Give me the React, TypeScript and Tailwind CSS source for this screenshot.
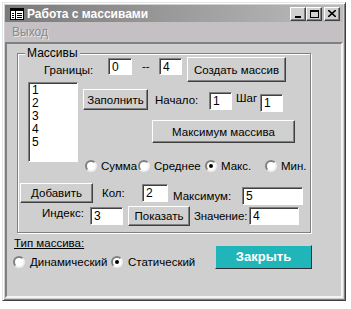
import React from "react";

const font = "font-['Liberation_Sans',Arial,sans-serif]";

function Btn({ className, children }: { className: string; children: React.ReactNode }) {
  return (
    <div
      className={`flex shrink-0 items-center justify-center border border-t-white border-l-white border-r-[#404040] border-b-[#404040] bg-[#d0d0d0] text-black shadow-[inset_-1px_-1px_0_#808080] ${className}`}
    >
      {children}
    </div>
  );
}

function Field({ className, value }: { className: string; value: string }) {
  return (
    <div
      className={`flex shrink-0 items-center border border-t-[#808080] border-l-[#808080] border-r-white border-b-white bg-white pl-[3px] text-[12px] text-black shadow-[inset_1px_1px_0_#404040] ${className}`}
    >
      {value}
    </div>
  );
}

function Radio({ checked }: { checked?: boolean }) {
  return (
    <span className="flex h-[12px] w-[12px] shrink-0 items-center justify-center rounded-full border-2 border-t-[#808080] border-l-[#808080] border-r-[#f0f0f0] border-b-[#f0f0f0] bg-white">
      {checked && <span className="h-[4px] w-[4px] rounded-full bg-black" />}
    </span>
  );
}

function CapBtn({ className, children }: { className: string; children: React.ReactNode }) {
  return (
    <div
      className={`flex h-[14px] w-[16px] items-center justify-center border border-t-white border-l-white border-r-[#404040] border-b-[#404040] bg-[#d0d0d0] shadow-[inset_-1px_-1px_0_#808080] ${className}`}
    >
      {children}
    </div>
  );
}

export default function App() {
  return (
    <div className={`h-[309px] w-[351px] bg-white pl-[2px] pt-[2px] text-[11.5px] leading-[14px] ${font}`}>
      {/* window */}
      <div className="flex h-[299px] w-[344px] flex-col border border-t-[#e4e4e4] border-l-[#e4e4e4] border-r-[#404040] border-b-[#404040] bg-[#cfcfcf] p-[2px] shadow-[inset_1px_1px_0_#ffffff,inset_-1px_-1px_0_#808080]">
        {/* title bar */}
        <div className="flex h-[17px] shrink-0 items-center bg-linear-to-r from-[#7a7a7a] to-[#bcbcbc] pl-[5px] pr-[3px]">
          <svg width="14" height="12" viewBox="0 0 14 12" className="shrink-0">
            <rect x="0.5" y="0.5" width="13" height="11" fill="#fff" stroke="#000" />
            <rect x="1" y="1" width="12" height="2" fill="#000" />
            <line x1="5.5" y1="3" x2="5.5" y2="11" stroke="#000" />
            <line x1="2" y1="5.5" x2="4" y2="5.5" stroke="#000" />
            <line x1="2" y1="7.5" x2="4" y2="7.5" stroke="#000" />
            <line x1="2" y1="9.5" x2="4" y2="9.5" stroke="#000" />
            <line x1="7" y1="5.5" x2="12" y2="5.5" stroke="#000" />
            <line x1="7" y1="7.5" x2="12" y2="7.5" stroke="#000" />
            <line x1="7" y1="9.5" x2="12" y2="9.5" stroke="#000" />
          </svg>
          <span className="ml-[3px] text-[12px] font-bold text-white">Работа с массивами</span>
          <div className="ml-auto flex items-center">
            <CapBtn className="">
              <span className="mt-[6px] h-[2px] w-[6px] bg-black" />
            </CapBtn>
            <CapBtn className="">
              <span className="h-[8px] w-[9px] border border-t-2 border-black" />
            </CapBtn>
            <CapBtn className="ml-[2px]">
              <svg width="8" height="7" viewBox="0 0 8 7">
                <path d="M0 0 L8 7 M8 0 L0 7" stroke="#000" strokeWidth="1.6" />
              </svg>
            </CapBtn>
          </div>
        </div>

        {/* menu bar */}
        <div className="flex h-[20px] shrink-0 items-center bg-[#c4c0c4] pl-[7px] text-[12px] text-[#8a8a8a] [text-shadow:1px_1px_0_#e8e8e8]">
          Выход
        </div>

        {/* client area */}
        <div className="flex-1 border-2 border-t-[#808080] border-l-[#808080] border-r-[#f4f4f4] border-b-[#f4f4f4] bg-[#cfcfcf] text-black">
          {/* group box */}
          <div className="relative ml-[10px] mt-[9px] h-[180px] w-[294px] border border-[#808080] shadow-[inset_1px_1px_0_#ffffff,1px_1px_0_#ffffff]">
            <span className="absolute left-[7px] top-[-8px] bg-[#cfcfcf] px-[2px] text-[12px]">Массивы</span>

            {/* row 1 */}
            <div className="ml-[26px] mt-[3px] flex h-[25px] items-start">
              <span className="mt-[6px] w-[64px]">Границы:</span>
              <Field className="mt-[1px] h-[17px] w-[24px]" value="0" />
              <span className="mt-[2px] w-[27px] pl-[10px]">--</span>
              <Field className="mt-[1px] h-[17px] w-[23px]" value="4" />
              <Btn className="ml-[5px] h-[25px] w-[99px]">Создать массив</Btn>
            </div>

            {/* list + controls */}
            <div className="flex items-start">
              <div className="ml-[10px] h-[80px] w-[50px] shrink-0 border border-t-[#808080] border-l-[#808080] border-r-white border-b-white bg-white pl-[3px] pt-[1px] text-[12px] leading-[13px] shadow-[inset_1px_1px_0_#404040]">
                <div>1</div>
                <div>2</div>
                <div>3</div>
                <div>4</div>
                <div>5</div>
              </div>
              <div className="ml-[5px] mt-[7px] flex flex-col">
                <div className="flex items-start">
                  <Btn className="h-[21px] w-[65px]">Заполнить</Btn>
                  <span className="ml-[7px] mt-[4px] w-[54px]">Начало:</span>
                  <Field className="mt-[3px] h-[18px] w-[23px]" value="1" />
                  <span className="mt-[2px] w-[28px] pl-[4px]">Шаг</span>
                  <Field className="mt-[5px] h-[18px] w-[23px]" value="1" />
                </div>
                <Btn className="ml-[69px] mt-[8px] h-[23px] w-[143px]">Максимум массива</Btn>
                <div className="ml-[2px] mt-[16px] flex h-[14px] items-center">
                  <div className="flex w-[53px] items-center gap-[4px]">
                    <Radio />
                    <span>Сумма</span>
                  </div>
                  <div className="flex w-[67px] items-center gap-[4px]">
                    <Radio />
                    <span>Среднее</span>
                  </div>
                  <div className="flex w-[60px] items-center gap-[4px]">
                    <Radio checked />
                    <span>Макс.</span>
                  </div>
                  <div className="flex items-center gap-[4px]">
                    <Radio />
                    <span>Мин.</span>
                  </div>
                </div>
              </div>
            </div>

            {/* row D */}
            <div className="ml-[2px] mt-[10px] flex items-start">
              <Btn className="h-[20px] w-[73px]">Добавить</Btn>
              <span className="mt-[3px] w-[49px] pl-[9px]">Кол:</span>
              <Field className="mt-[1px] h-[18px] w-[26px]" value="2" />
              <span className="mt-[6px] w-[74px] pl-[5px]">Максимум:</span>
              <Field className="mt-[4px] h-[18px] w-[61px]" value="5" />
            </div>

            {/* row E */}
            <div className="mt-[1px] flex items-start">
              <span className="mt-[0px] w-[72px] pl-[24px]">Индекс:</span>
              <Field className="mt-[1px] h-[18px] w-[33px]" value="3" />
              <Btn className="ml-[5px] h-[20px] w-[62px]">Показать</Btn>
              <span className="mt-[3px] w-[59px] pl-[4px] tracking-[-0.1px]">Значение:</span>
              <Field className="mt-[1px] h-[18px] w-[50px]" value="4" />
            </div>
          </div>

          {/* bottom */}
          <div className="flex items-start">
            <div className="flex w-[208px] flex-col pl-[6px]">
              <span className="ml-[1px] mt-[3px] underline">Тип массива:</span>
              <div className="mt-[5px] flex h-[14px] items-center">
                <div className="flex w-[98px] items-center gap-[5px]">
                  <Radio />
                  <span>Динамический</span>
                </div>
                <div className="flex items-center gap-[5px]">
                  <Radio checked />
                  <span>Статический</span>
                </div>
              </div>
            </div>
            <div className="mt-[12px] flex h-[24px] w-[97px] items-center justify-center border border-t-[#9ee6e6] border-l-[#9ee6e6] border-r-[#303030] border-b-[#303030] bg-[#20b6b9] text-[13px] font-bold text-white">
              Закрыть
            </div>
          </div>
        </div>
      </div>
    </div>
  );
}
